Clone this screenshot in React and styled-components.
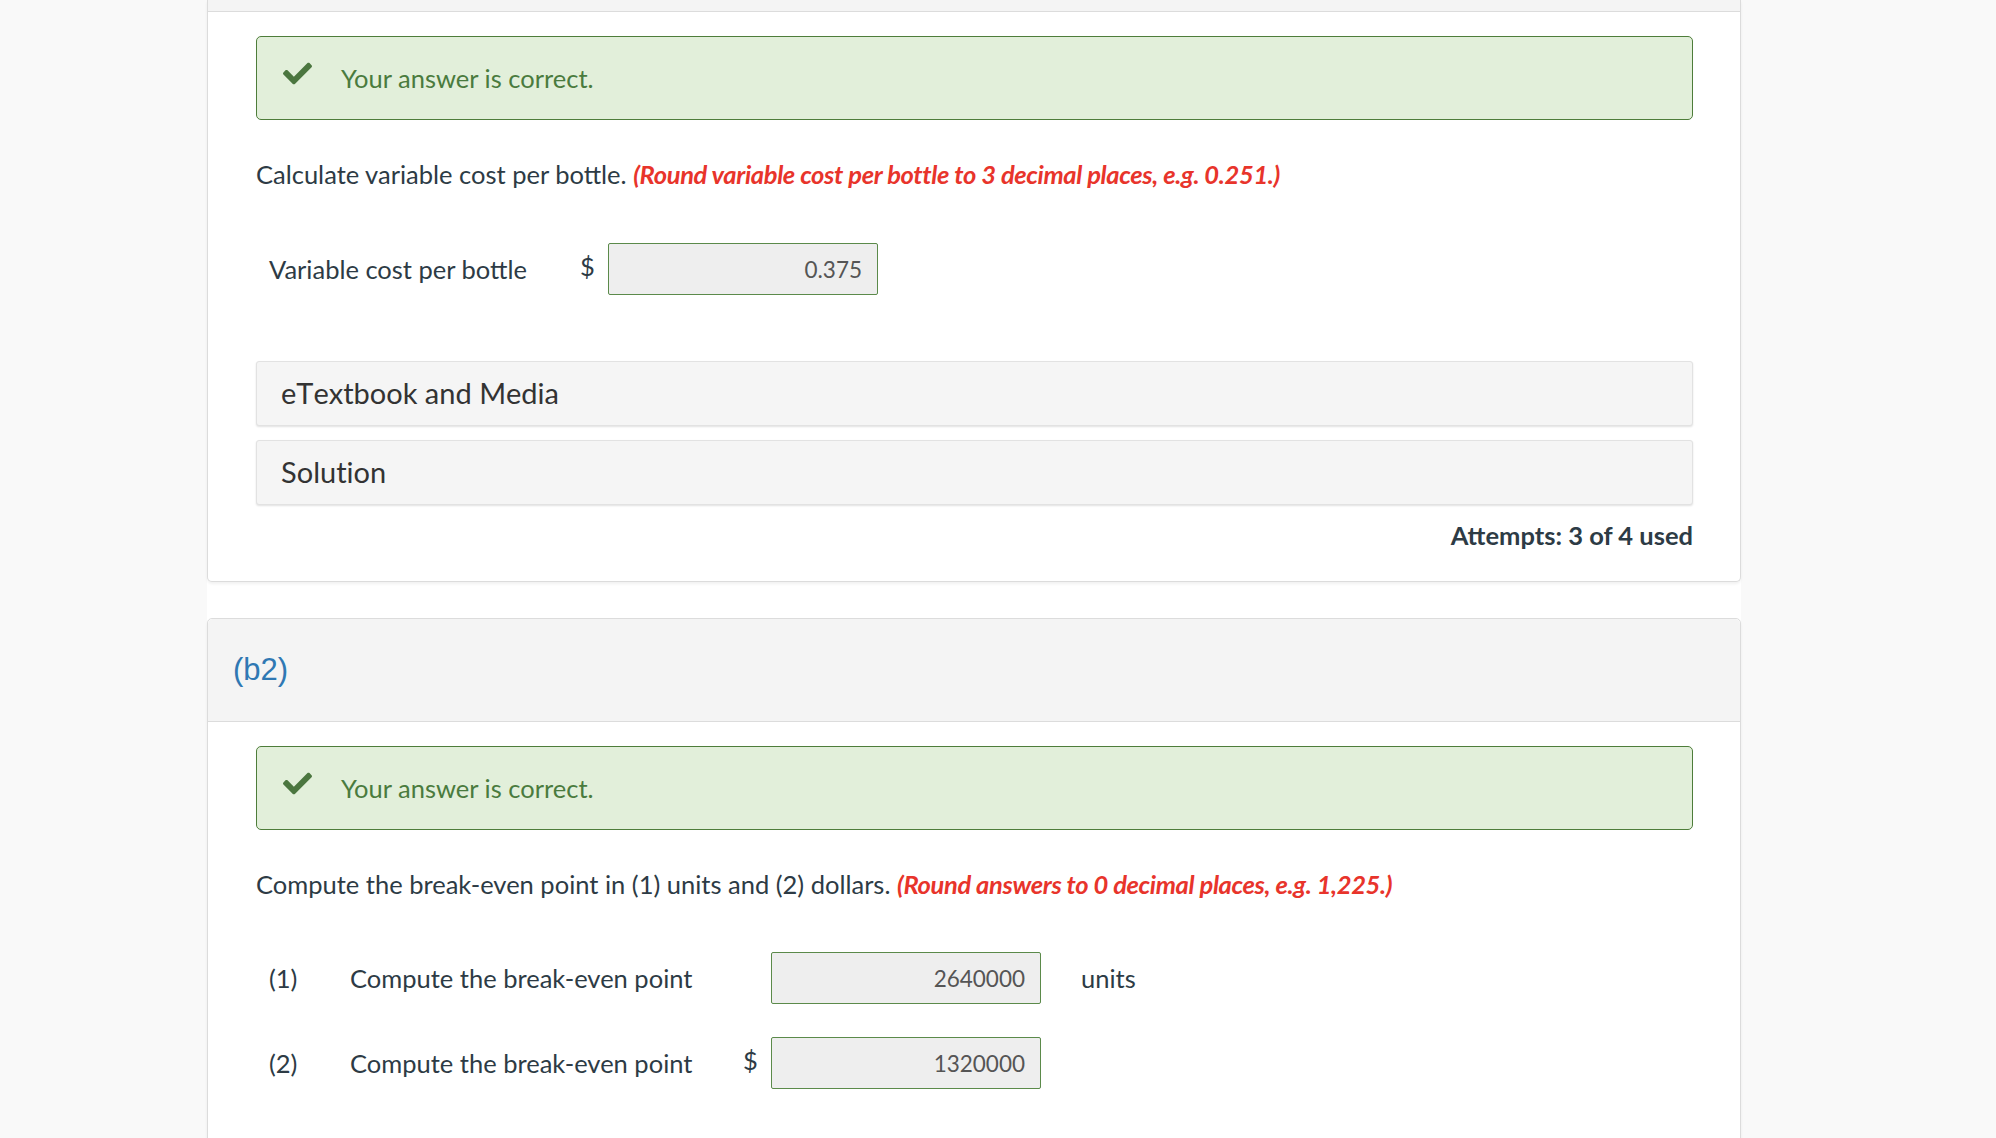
import styled, { createGlobalStyle } from "styled-components"
import { FaCheck } from "react-icons/fa"

const GlobalStyle = createGlobalStyle`
    html, body {
        margin: 0;
        padding: 0;
        background-color: #f9f9f9;
        font-family: "Lato", "Noto Sans", sans-serif;
        color: #2d3b45;
    }
`

const Page = styled.div`
    padding-left: 207px;
    height: 1138px;
    overflow: hidden;
`

const Column = styled.div`
    width: 1534px;
    background-color: #fff;
    display: flex;
    flex-direction: column;
    gap: 36px;
    min-height: 1138px;
`

const Card = styled.section`
    border: 1px solid #dcdcdc;
    border-top: ${props => (props.$cut ? "none" : "1px solid #dcdcdc")};
    border-radius: ${props => (props.$cut ? "0 0 5px 5px" : "5px 5px 0 0")};
    box-shadow: 0 2px 3px rgba(0, 0, 0, 0.06);
    background-color: #fff;
`

const CardHeader = styled.header`
    background-color: #f4f4f4;
    border-bottom: 1px solid #dcdcdc;
    height: ${props => props.$height}px;
    display: flex;
    align-items: center;
    padding-left: 25px;
    border-radius: ${props => (props.$cut ? "0" : "5px 5px 0 0")};
`

const PartTitle = styled.h2`
    margin: 0;
    font-family: "Liberation Sans", Arial, sans-serif;
    font-weight: 400;
    font-size: 31px;
    color: #2f78b3;
`

const CardBody = styled.div`
    padding: ${props => props.$top}px 47px ${props => props.$bottom}px 48px;
    display: flex;
    flex-direction: column;
`

const CorrectBox = styled.div`
    height: 82px;
    border: 1px solid #4e7d3a;
    border-radius: 5px;
    background-color: #e2efda;
    display: flex;
    align-items: center;
    padding-left: 26px;
    gap: 29px;
    color: #4a7b3e;
    font-size: 25.5px;
    svg {
        font-size: 29px;
        color: #4b763f;
        margin-top: -10px;
    }
`

const Question = styled.p`
    margin: 37px 0 0;
    font-size: 25.5px;
    line-height: 34px;
    em {
        font-style: italic;
        font-weight: 700;
        color: #e8342b;
        letter-spacing: -0.35px;
    }
`

const AnswerRows = styled.div`
    margin-top: ${props => props.$top}px;
    display: flex;
    flex-direction: column;
    gap: 33px;
`

const AnswerRow = styled.div`
    display: flex;
    align-items: center;
    padding-left: 13px;
    font-size: 25.5px;
`

const RowNum = styled.span`
    width: 81px;
`

const RowLabel = styled.span`
    width: ${props => props.$width}px;
`

const Dollar = styled.span`
    width: 28px;
    margin-top: -6px;
    visibility: ${props => (props.$hide ? "hidden" : "visible")};
`

const ValueBox = styled.div`
    width: 270px;
    height: 52px;
    box-sizing: border-box;
    border: 1px solid #5b8a4a;
    border-radius: 2px;
    background-color: #eeeeee;
    display: flex;
    align-items: center;
    justify-content: flex-end;
    padding-right: 15px;
    color: #555;
    font-size: 22.5px;
`

const Unit = styled.span`
    margin-left: 40px;
`

const Panels = styled.div`
    margin-top: 66px;
    display: flex;
    flex-direction: column;
    gap: 14px;
`

const Panel = styled.div`
    height: 65px;
    box-sizing: border-box;
    background-color: #f5f5f5;
    border: 1px solid #e2e2e2;
    border-radius: 3px;
    box-shadow: 0 1px 2px rgba(0, 0, 0, 0.12);
    display: flex;
    align-items: center;
    padding: 0 0 3px 24px;
    font-size: 29px;
    font-kerning: none;
    font-variant-ligatures: none;
    color: #333;
`

const Attempts = styled.div`
    margin-top: 15px;
    text-align: right;
    font-weight: 700;
    font-size: 25.5px;
`

const Correct = () => (
    <CorrectBox>
        <FaCheck />
        <span>Your answer is correct.</span>
    </CorrectBox>
)

const App = () => {
    return (
        <Page>
            <GlobalStyle />
            <Column>
                <Card $cut>
                    <CardHeader $height={11} $cut />
                    <CardBody $top={24} $bottom={31}>
                        <Correct />
                        <Question>
                            Calculate variable cost per bottle.{" "}
                            <em>(Round variable cost per bottle to 3 decimal places, e.g. 0.251.)</em>
                        </Question>
                        <AnswerRows $top={52}>
                            <AnswerRow>
                                <RowLabel $width={311}>Variable cost per bottle</RowLabel>
                                <Dollar>$</Dollar>
                                <ValueBox>0.375</ValueBox>
                            </AnswerRow>
                        </AnswerRows>
                        <Panels>
                            <Panel>eTextbook and Media</Panel>
                            <Panel>Solution</Panel>
                        </Panels>
                        <Attempts>Attempts: 3 of 4 used</Attempts>
                    </CardBody>
                </Card>
                <Card>
                    <CardHeader $height={102}>
                        <PartTitle>(b2)</PartTitle>
                    </CardHeader>
                    <CardBody $top={24} $bottom={60}>
                        <Correct />
                        <Question>
                            Compute the break-even point in (1) units and (2) dollars.{" "}
                            <em>(Round answers to 0 decimal places, e.g. 1,225.)</em>
                        </Question>
                        <AnswerRows $top={51}>
                            <AnswerRow>
                                <RowNum>(1)</RowNum>
                                <RowLabel $width={393}>Compute the break-even point</RowLabel>
                                <Dollar $hide>$</Dollar>
                                <ValueBox>2640000</ValueBox>
                                <Unit>units</Unit>
                            </AnswerRow>
                            <AnswerRow>
                                <RowNum>(2)</RowNum>
                                <RowLabel $width={393}>Compute the break-even point</RowLabel>
                                <Dollar>$</Dollar>
                                <ValueBox>1320000</ValueBox>
                            </AnswerRow>
                        </AnswerRows>
                    </CardBody>
                </Card>
            </Column>
        </Page>
    )
}

export default App
